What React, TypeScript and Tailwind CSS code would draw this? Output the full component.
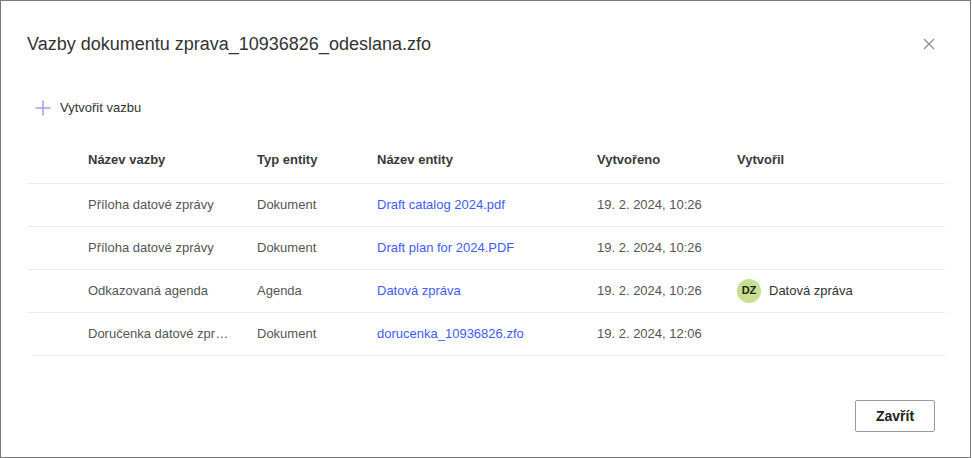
import React from "react";

type Row = {
  name: string;
  type: string;
  entity: string;
  created: string;
  author?: { initials: string; name: string };
};

const rows: Row[] = [
  {
    name: "Příloha datové zprávy",
    type: "Dokument",
    entity: "Draft catalog 2024.pdf",
    created: "19. 2. 2024, 10:26",
  },
  {
    name: "Příloha datové zprávy",
    type: "Dokument",
    entity: "Draft plan for 2024.PDF",
    created: "19. 2. 2024, 10:26",
  },
  {
    name: "Odkazovaná agenda",
    type: "Agenda",
    entity: "Datová zpráva",
    created: "19. 2. 2024, 10:26",
    author: { initials: "DZ", name: "Datová zpráva" },
  },
  {
    name: "Doručenka datové zprávy",
    type: "Dokument",
    entity: "dorucenka_10936826.zfo",
    created: "19. 2. 2024, 12:06",
  },
];

const cols = "grid grid-cols-[61px_169px_120px_220px_140px_1fr] items-center";

export default function App() {
  return (
    <div className="w-[972px] h-[458px] bg-white font-['Liberation_Sans',Arial,sans-serif]">
      <div className="w-[971px] h-[458px] border border-[#7a7a7a] bg-white flex flex-col">
        {/* Header */}
        <div className="flex items-center justify-between pl-[26px] pr-[35px] pt-[31px]">
          <h1 className="text-[18px] leading-[24px] text-[#333]">
            Vazby dokumentu zprava_10936826_odeslana.zfo
          </h1>
          <button className="text-[#8a8a8a]">
            <svg width="12" height="12" viewBox="0 0 12 12" fill="none" stroke="currentColor" strokeWidth="1.2">
              <path d="M1 1l10 10M11 1L1 11" />
            </svg>
          </button>
        </div>

        {/* Create link */}
        <div className="pl-[34px] mt-[42px] flex items-center gap-[9px]">
          <svg width="16" height="16" viewBox="0 0 16 16" fill="none" stroke="#b19cf9" strokeWidth="1.6">
            <path d="M8 0.5v15M0.5 8h15" />
          </svg>
          <span className="text-[13px] text-[#333]">Vytvořit vazbu</span>
        </div>

        {/* Table */}
        <div className="ml-[26px] mr-[25px] mt-[20px] text-[13px]">
          <div className={`${cols} h-[46px] border-b border-[#ebebeb] font-bold text-[#3a3a3a]`}>
            <div />
            <div>Název vazby</div>
            <div>Typ entity</div>
            <div>Název entity</div>
            <div>Vytvořeno</div>
            <div>Vytvořil</div>
          </div>
          {rows.map((r, i) => (
            <div key={i}>
              <div className={`${cols} h-[42px] text-[#555]`}>
                <div />
                <div className="truncate pr-[22px]">{r.name}</div>
                <div>{r.type}</div>
                <div className="text-[#3f5cf8]">{r.entity}</div>
                <div>{r.created}</div>
                <div className="flex items-center gap-[8px]">
                  {r.author && (
                    <>
                      <span className="w-[24px] h-[24px] rounded-full bg-[#c7df8e] flex items-center justify-center text-[11px] font-bold text-[#222]">
                        {r.author.initials}
                      </span>
                      <span className="text-[#333]">{r.author.name}</span>
                    </>
                  )}
                </div>
              </div>
              <div className={`h-px bg-[#ebebeb] ${i === rows.length - 1 ? "ml-[5px]" : ""}`} />
            </div>
          ))}
        </div>

        {/* Footer */}
        <div className="mt-auto mb-[25px] mr-[35px] flex justify-end">
          <button className="w-[80px] h-[32px] border border-[#9a9a9a] rounded-[2px] text-[14px] font-bold text-[#222]">
            Zavřít
          </button>
        </div>
      </div>
    </div>
  );
}
